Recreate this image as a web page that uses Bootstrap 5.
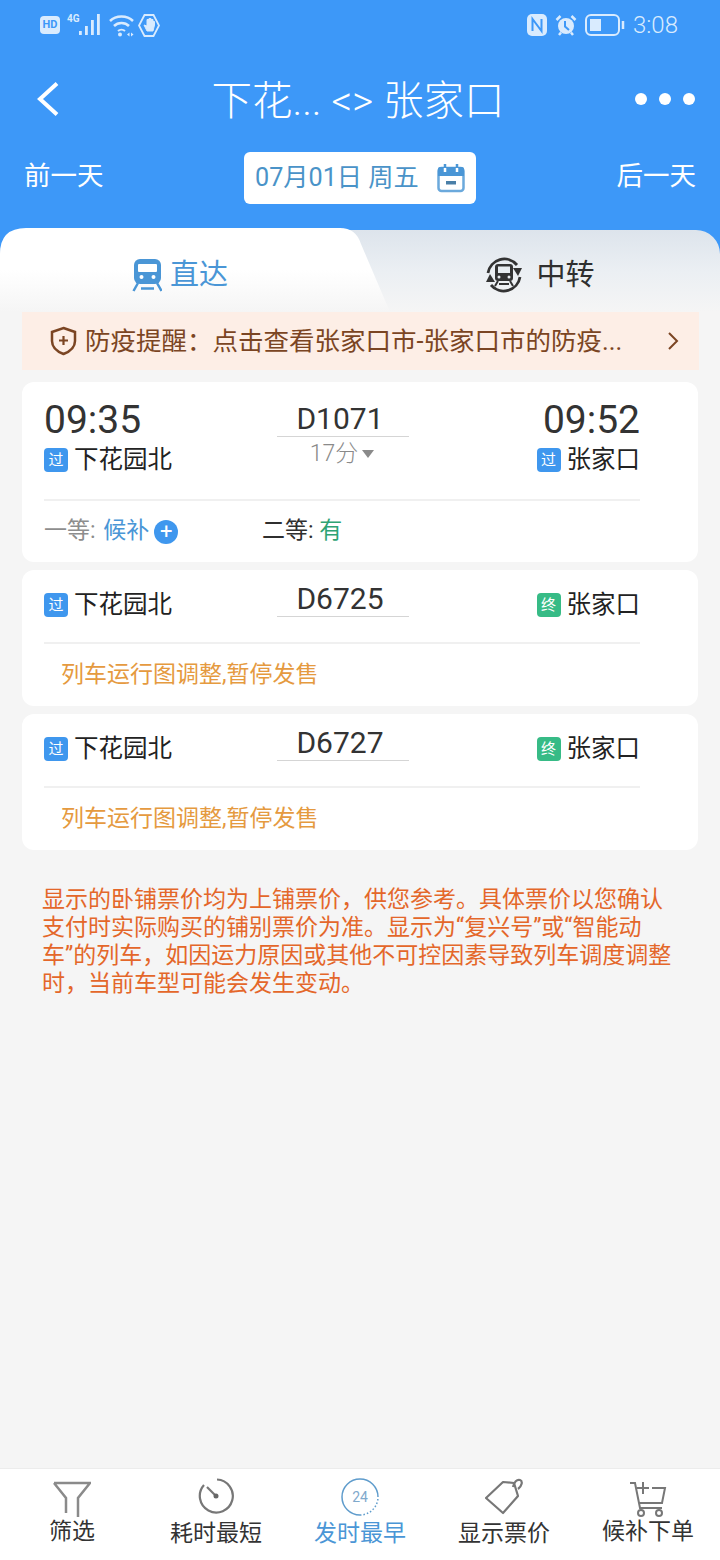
<!DOCTYPE html>
<html lang="zh-CN">
<head>
    <meta charset="UTF-8">
    <meta name="viewport" content="width=device-width, initial-scale=1.0">
    <title>下花园北 - 张家口</title>
    <link rel="stylesheet" href="https://cdn.jsdelivr.net/npm/bootstrap@5.3.0/dist/css/bootstrap.min.css">
    <style>
        body {
            width: 720px;
            height: 1560px;
            overflow: hidden;
            background-color: #f5f5f5;
            font-family: Roboto, "Noto Sans CJK SC", sans-serif;
            color: #2f2f2f;
        }
        .page-top { background-color: #3d98f8; color: #fff; }
        .status-row { height: 50px; padding: 0 42px 0 40px; color: #d9ebfe; }
        .hd-tag {
            width: 20px; height: 18px; border-radius: 4px;
            background-color: #d9ebfe; color: #3d98f8;
            font-size: 11px; font-weight: 700; line-height: 18px; text-align: center;
        }
        .net-tag { font-size: 10px; font-weight: 700; line-height: 1; margin: -12px 0 0 7px; width: 12px; }
        .clock-text { font-size: 24px; font-weight: 300; margin-left: 8px; }
        .title-row { height: 100px; padding: 0 25px 0 37px; }
        .title-row svg { margin-bottom: 3px; }
        .title-text { font-size: 40.500px; font-weight: 300; line-height: 1; padding-left: 22px; margin-top: 2px; }
        .dots { gap: 12px; margin-bottom: 3px; }
        .dots span { width: 12px; height: 12px; border-radius: 50%; background-color: #fff; }
        .date-row { padding: 0 24px 24px; height: 80px; font-size: 26.500px; }
        .day-link { margin-bottom: 4px; }
        .date-pill {
            width: 232px; height: 52px; border-radius: 6px; background-color: #fff;
            color: #4a93c8; padding: 0 11px; font-size: 25.200px;
        }
        .tab-strip {
            height: 82px;
            border-radius: 24px 24px 0 0;
            background: linear-gradient(180deg, #dde4ec 0%, #ebeff3 50%, #f5f5f5 100%);
        }
        .tab-on {
            width: 390px; height: 84px; margin-top: -2px; padding: 10px 30px 0 0;
            background: linear-gradient(180deg, #fff 0%, #fff 50%, #f5f5f5 100%);
            clip-path: path('M0 84 V26 Q0 0 26 0 H340 Q356 0 361 16 L390 84 Z');
            color: #4a96d6;
        }
        .tab-off { padding: 8px 30px 0 0; color: #2f2f2f; gap: 13px; }
        .tab-label { font-size: 29px; line-height: 1; }
        .tips-bar {
            height: 58px; margin: 0 21px 0 22px; padding: 0 20px 0 28px;
            background-color: #fdeee6; color: #7b4523; font-size: 25.500px; white-space: nowrap;
        }
        .train-list { padding: 12px 22px 0; gap: 8px; }
        .train-box { border: 0; border-radius: 12px; padding: 0 58px 0 22px; background-color: #fff; }
        .train-grid { display: grid; grid-template-columns: 233px 132px 1fr; }
        .time-text { font-size: 39px; line-height: 44px; color: #333; }
        .station { font-size: 24.500px; line-height: 36px; color: #222; gap: 6px; white-space: nowrap; }
        .station-plain { padding-top: 17px; }
        .stop-tag {
            width: 24px; height: 24px; border-radius: 4px; color: #fff;
            font-size: 15px; line-height: 24px; text-align: center; flex: none;
        }
        .tag-pass { background-color: #3f97ee; }
        .tag-end { background-color: #37bb86; }
        .train-no {
            font-size: 30px; line-height: 34px; color: #333; text-align: center;
            padding-right: 6px; border-bottom: 1px solid #d5d5d5;
        }
        .no-first { padding-top: 20px; }
        .no-plain { padding-top: 12px; }
        .use-time { font-size: 23px; line-height: 34px; color: #8a8a8a; font-weight: 300; padding-right: 2px; }
        .drop-mark {
            width: 0; height: 0; display: inline-block; margin-left: 4px; vertical-align: 3px;
            border: 6px solid transparent; border-top: 8px solid #8a8a8a; border-bottom: 0;
        }
        .train-line { border-top: 2px solid #f0f0f0; }
        .gap-first { margin-top: 21px; }
        .gap-plain { margin-top: 19px; }
        .seat-row { height: 61px; font-size: 23px; }
        .seat-one { width: 218px; color: #8d8d8d; gap: 5px; }
        .seat-wait { color: #4a96d6; margin-left: 2px; }
        .seat-have { color: #2ea374; }
        .plus-dot {
            width: 24px; height: 24px; border-radius: 50%; background-color: #3f97ee;
            color: #fff; font-size: 22px; line-height: 23px; text-align: center; display: inline-block;
        }
        .stop-note { height: 62px; padding-left: 17px; font-size: 23px; color: #e59a3f; }
        .fare-note { padding: 36px 22px 0 42px; font-size: 23px; line-height: 28px; color: #e4672a; white-space: nowrap; }
        .tool-bar { height: 92px; background-color: #fff; border-top: 1px solid #ececec; }
        .tool-item { width: 144px; height: 91px; padding-top: 9px; font-size: 23px; line-height: 28px; color: #333; }
        .tool-item svg { flex: none; }
        .tool-on { color: #4a96d6; }
        .label-low { margin-top: 4px; }
    </style>
</head>
<body class="d-flex flex-column">

<div class="page-top">
    <!-- status bar -->
    <div class="status-row d-flex align-items-center justify-content-between">
        <div class="d-flex align-items-center">
            <span class="hd-tag">HD</span>
            <span class="net-tag">4G</span>
            <svg width="22" height="22" viewBox="0 0 22 22" fill="#d9ebfe">
                <rect x="0" y="17" width="2.800" height="4"/><rect x="6" y="12" width="2.800" height="9"/>
                <rect x="12" y="6" width="2.800" height="15"/><rect x="18" y="0" width="2.800" height="21"/>
            </svg>
            <svg class="ms-2" width="25" height="23" viewBox="0 0 25 23" fill="none" stroke="#d9ebfe" stroke-width="2.500">
                <path d="M1 7C7 1 18 1 24 7"/><path d="M5 12c4-4 11-4 15 0"/><path d="M9 17c2-1.800 5-1.800 7 0" stroke-width="2"/>
                <circle cx="11" cy="20.500" r="2" fill="#d9ebfe" stroke="none"/>
                <path d="M18 20.500l2.500-2v4zM24.500 20.500l-2.500-2v4z" fill="#d9ebfe" stroke="none"/>
            </svg>
            <svg class="ms-1" width="22" height="23" viewBox="0 0 22 23" fill="none" stroke="#d9ebfe" stroke-width="1.800">
                <path d="M6.500 1h9L21 11.500 15.500 22h-9L1 11.500z"/>
                <path d="M6 11l3 6h6l1.500-6V7.500L15 7.500V11 5.500h-2V11 4.500h-2V11 5.500H9V12z" fill="#d9ebfe" stroke-width="1"/>
            </svg>
        </div>
        <div class="d-flex align-items-center">
            <svg width="20" height="22" viewBox="0 0 20 22">
                <rect x="0" y="0" width="20" height="22" rx="5" fill="#d9ebfe"/>
                <path d="M5.500 17V5l9 12V5" fill="none" stroke="#3d98f8" stroke-width="2"/>
            </svg>
            <svg class="ms-2" width="22" height="22" viewBox="0 0 22 22" fill="none" stroke="#d9ebfe" stroke-width="2.500">
                <circle cx="11" cy="12" r="8" fill="#d9ebfe" stroke="none"/><path d="M10 7v5.500l4 3.500" stroke="#3d98f8" stroke-width="2"/>
                <path d="M1.500 6l4-4M20.500 6l-4-4M4 21l2-2.500M18 21l-2-2.500"/>
            </svg>
            <svg class="ms-2" width="40" height="22" viewBox="0 0 40 22" fill="none" stroke="#d9ebfe" stroke-width="2">
                <rect x="1" y="1" width="33" height="20" rx="5"/>
                <rect x="5" y="5" width="11" height="12" fill="#d9ebfe" stroke="none"/>
                <path d="M38 7v8" stroke-width="2.500"/>
            </svg>
            <span class="clock-text">3:08</span>
        </div>
    </div>

    <!-- title -->
    <div class="title-row d-flex align-items-center justify-content-between">
        <svg width="22" height="34" viewBox="0 0 22 34" fill="none" stroke="#fff" stroke-width="4">
            <path d="M20 1.500L3 17l17 15.500"/>
        </svg>
        <div class="title-text">下花... &lt;&gt; 张家口</div>
        <div class="dots d-flex"><span></span><span></span><span></span></div>
    </div>

    <!-- date row -->
    <div class="date-row d-flex align-items-center justify-content-between">
        <span class="day-link">前一天</span>
        <div class="date-pill d-flex align-items-center justify-content-between">
            <span>07月01日 周五</span>
            <svg width="28" height="30" viewBox="0 0 28 30">
                <rect x="1.500" y="5" width="25" height="23" rx="3" fill="#fff" stroke="#6ba9dc" stroke-width="2.500"/>
                <path d="M3 4h22a2 2 0 0 1 2 2v7H1V6a2 2 0 0 1 2-2z" fill="#4a96d6"/>
                <path d="M8 1v4M20 1v4" stroke="#4a96d6" stroke-width="2.500"/>
                <path d="M8 5v4M20 5v4" stroke="#fff" stroke-width="2.500"/>
                <rect x="9" y="18" width="10" height="3.500" fill="#4a7fa8"/>
            </svg>
        </div>
        <span class="day-link">后一天</span>
    </div>

    <!-- direct / transfer tabs -->
    <div class="tab-strip d-flex">
        <div class="tab-on d-flex align-items-center justify-content-center gap-2">
            <svg width="30" height="34" viewBox="0 0 30 34">
                <path d="M8 1h15a6 6 0 0 1 6 6v13a6 6 0 0 1-6 6H8a6 6 0 0 1-6-6V7a6 6 0 0 1 6-6z" fill="#4a96d6"/>
                <rect x="6" y="6" width="19" height="8" rx="1" fill="#fff"/>
                <circle cx="9.500" cy="19" r="2" fill="#fff"/><circle cx="21.500" cy="19" r="2" fill="#fff"/>
                <path d="M6 25l-4.500 8M25 25l4.500 8M9 30.500h13" fill="none" stroke="#4a96d6" stroke-width="2.500"/>
            </svg>
            <span class="tab-label">直达</span>
        </div>
        <div class="tab-off flex-fill d-flex align-items-center justify-content-center">
            <svg width="38" height="38" viewBox="0 0 38 38" fill="none" stroke="#333" stroke-width="2.800">
                <path d="M3 17A16.500 16.500 0 0 1 32 9"/><path d="M35 21A16.500 16.500 0 0 1 6 29"/>
                <path d="M28 12h9l-4 8zM1 26h9l-5-8z" fill="#333" stroke="none"/>
                <rect x="10" y="8" width="18" height="17" rx="3" fill="#333" stroke="none"/>
                <rect x="13" y="10.500" width="12" height="6.500" fill="#e8edf1" stroke="none"/>
                <circle cx="14" cy="21" r="1.500" fill="#e8edf1" stroke="none"/><circle cx="24" cy="21" r="1.500" fill="#e8edf1" stroke="none"/>
                <path d="M13 25l-3 5M25 25l3 5M14 28h10" stroke-width="2"/>
            </svg>
            <span class="tab-label">中转</span>
        </div>
    </div>
</div>

<!-- epidemic notice -->
<div class="tips-bar d-flex align-items-center justify-content-between">
    <div class="d-flex align-items-center gap-2">
        <svg width="27" height="30" viewBox="0 0 27 30" fill="none" stroke="#7b4523" stroke-width="2.500">
            <path d="M13.500 2L25 6v9c0 6-5 10.500-11.500 13C7 25.500 2 21 2 15V6z"/>
            <path d="M13.500 10v9M9 14.500h9" stroke-width="2.200"/>
        </svg>
        <span>防疫提醒&#xFF1A;点击查看张家口市-张家口市的防疫...</span>
    </div>
    <svg width="12" height="20" viewBox="0 0 12 20" fill="none" stroke="#7b4523" stroke-width="2"><path d="M2 2l8 8-8 8"/></svg>
</div>

<!-- trains -->
<div class="train-list d-flex flex-column">
    <div class="card train-box">
        <div class="train-grid">
            <div class="pt-3">
                <div class="time-text">09:35</div>
                <div class="station d-flex align-items-center">
                    <span class="stop-tag tag-pass">过</span>下花园北
                </div>
            </div>
            <div class="text-center no-first">
                <div class="train-no">D1071</div>
                <div class="use-time">17分<span class="drop-mark"></span></div>
            </div>
            <div class="pt-3 d-flex flex-column align-items-end">
                <div class="time-text">09:52</div>
                <div class="station d-flex align-items-center">
                    <span class="stop-tag tag-pass">过</span>张家口
                </div>
            </div>
        </div>
        <div class="train-line gap-first"></div>
        <div class="seat-row d-flex align-items-center">
            <div class="seat-one d-flex align-items-center">
                <span>一等: <span class="seat-wait">候补</span></span><span class="plus-dot">+</span>
            </div>
            <div>二等: <span class="seat-have">有</span></div>
        </div>
    </div>

    <div class="card train-box">
        <div class="train-grid">
            <div class="station station-plain d-flex align-items-center">
                <span class="stop-tag tag-pass">过</span>下花园北
            </div>
            <div class="no-plain">
                <div class="train-no">D6725</div>
            </div>
            <div class="station station-plain d-flex align-items-center justify-content-end">
                <span class="stop-tag tag-end">终</span>张家口
            </div>
        </div>
        <div class="train-line gap-plain"></div>
        <div class="stop-note d-flex align-items-center">列车运行图调整,暂停发售</div>
    </div>

    <div class="card train-box">
        <div class="train-grid">
            <div class="station station-plain d-flex align-items-center">
                <span class="stop-tag tag-pass">过</span>下花园北
            </div>
            <div class="no-plain">
                <div class="train-no">D6727</div>
            </div>
            <div class="station station-plain d-flex align-items-center justify-content-end">
                <span class="stop-tag tag-end">终</span>张家口
            </div>
        </div>
        <div class="train-line gap-plain"></div>
        <div class="stop-note d-flex align-items-center">列车运行图调整,暂停发售</div>
    </div>
</div>

<div class="fare-note flex-fill">
    显示的卧铺票价均为上铺票价&#xFF0C;供您参考。具体票价以您确认<br>
    支付时实际购买的铺别票价为准。显示为“复兴号”或“智能动<br>
    车”的列车&#xFF0C;如因运力原因或其他不可控因素导致列车调度调整<br>
    时&#xFF0C;当前车型可能会发生变动。
</div>

<!-- bottom tools -->
<div class="tool-bar d-flex">
    <div class="tool-item d-flex flex-column align-items-center">
        <svg width="38" height="40" viewBox="0 0 38 40" fill="none" stroke="#8a8a8a" stroke-width="2.500">
            <path d="M1 5h36L25 20v19M13 35V20L1 5"/>
        </svg>
        <span>筛选</span>
    </div>
    <div class="tool-item d-flex flex-column align-items-center">
        <svg width="38" height="38" viewBox="0 0 38 38" fill="none" stroke="#777" stroke-width="2.200">
            <path d="M20 1.500A16.500 16.500 0 1 1 7 7"/><path d="M10 9l9 9"/><circle cx="19" cy="18" r="2.500" fill="#666" stroke="none"/>
        </svg>
        <span class="label-low">耗时最短</span>
    </div>
    <div class="tool-item tool-on d-flex flex-column align-items-center">
        <svg width="38" height="38" viewBox="0 0 38 38" fill="none" stroke="#5f9ccc" stroke-width="1.500">
            <path d="M37 19A18 18 0 1 0 19 37"/><path d="M19 37A18 18 0 0 0 37 19" stroke-dasharray="1.500 2"/>
            <text x="19" y="24" text-anchor="middle" font-size="14" fill="#7fa9cc" stroke="none" font-family="Roboto">24</text>
        </svg>
        <span class="label-low">发时最早</span>
    </div>
    <div class="tool-item d-flex flex-column align-items-center">
        <svg width="38" height="38" viewBox="0 0 38 38" fill="none" stroke="#777" stroke-width="2.200" stroke-linejoin="round">
            <path d="M1 20L18 4l11 1 4 13-15 17z"/>
            <path d="M28 9c1-5 4-8 7-7s2 6-2 9"/>
        </svg>
        <span class="label-low">显示票价</span>
    </div>
    <div class="tool-item d-flex flex-column align-items-center">
        <svg width="38" height="40" viewBox="0 0 38 40" fill="none" stroke="#777" stroke-width="2">
            <path d="M1 5h5l5 25h22"/><path d="M23 10h13l-3 15H10"/><path d="M14 4v12M8 10h12"/>
            <circle cx="12" cy="35" r="3"/><circle cx="30" cy="35" r="3"/>
        </svg>
        <span>候补下单</span>
    </div>
</div>

<script src="https://cdn.jsdelivr.net/npm/bootstrap@5.3.0/dist/js/bootstrap.bundle.min.js"></script>
</body>
</html>
